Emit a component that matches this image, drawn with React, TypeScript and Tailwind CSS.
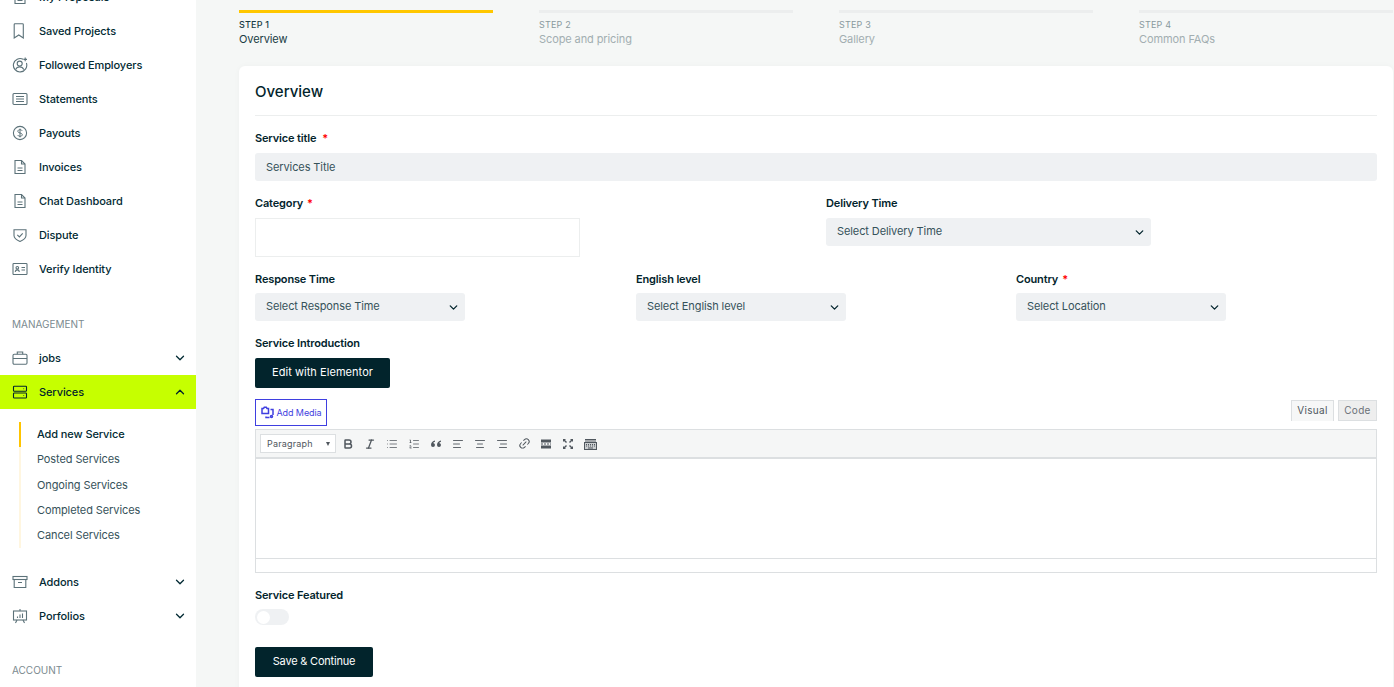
import React from 'react';
import {
  ChevronDown,
  ChevronUp,
  Bold,
  Italic,
  List,
  ListOrdered,
  AlignLeft,
  AlignCenter,
  AlignRight,
  Link2,
} from 'lucide-react';

const font = { fontFamily: 'Inter' };

const iconBase = {
  width: 16,
  height: 16,
  viewBox: '0 0 16 16',
  fill: 'none',
  stroke: 'currentColor',
  strokeWidth: 1.100,
};

const BookmarkIcon = () => (
  <svg {...iconBase} className="-ml-[1px]">
    <path d="M4 .8h7.500a.8.8 0 0 1 .8.800V15L7.800 12 3.200 15V1.600A.8.800 0 0 1 4 .8z" />
  </svg>
);

const FollowIcon = () => (
  <svg {...iconBase}>
    <path d="M11.200 2.300A6.700 6.700 0 1 0 14.400 6" />
    <circle cx="7.700" cy="6.600" r="2.500" />
    <path d="M3.600 12.600c.8-1.800 2.300-2.700 4.100-2.700s3.300.9 4.100 2.700" />
    <path d="M13.200.6v3.600M11.400 2.400H15" />
  </svg>
);

const StatementIcon = () => (
  <svg {...iconBase}>
    <rect x="1" y="2.500" width="14" height="11" rx="1" />
    <path d="M4 5.500h8M4 8h8M4 10.500h8" />
  </svg>
);

const DollarIcon = () => (
  <svg {...iconBase}>
    <circle cx="8" cy="8" r="6.600" />
    <path d="M10.200 5.800C9.900 5 9 4.700 8 4.700c-1.200 0-2.200.6-2.200 1.600 0 2.200 4.500 1.200 4.500 3.400 0 1-1 1.600-2.300 1.600-1.100 0-2-.4-2.300-1.200M8 3.600v8.800" strokeWidth="1" />
  </svg>
);

const DocIcon = () => (
  <svg {...iconBase}>
    <path d="M3 1.500h6.500L13 5v9.500H3z" />
    <path d="M9.500 1.500V5H13M5.500 9h5M5.500 11.500h5" />
  </svg>
);

const ShieldIcon = () => (
  <svg {...iconBase}>
    <path d="M2 2.800c4 0 8 0 12 0v5.700c0 2.800-3.100 4.800-6 6-2.900-1.200-6-3.200-6-6z" />
    <path d="M5.300 7.800l2.100 2.100 3.300-3.500" />
  </svg>
);

const IdIcon = () => (
  <svg {...iconBase}>
    <rect x="1" y="2.500" width="14" height="11" rx=".8" />
    <circle cx="5.300" cy="6.800" r="1.300" />
    <path d="M3.200 10.900c.2-1.400 1-2 2.100-2s1.900.6 2.100 2M9.500 6.500h3.500M9.500 9h3.500" />
  </svg>
);

const BriefcaseIcon = () => (
  <svg {...iconBase}>
    <rect x="1" y="4.200" width="14" height="10" rx="1.200" />
    <path d="M5.300 4.200V2h5.400v2.200M1 8.500h14" />
  </svg>
);

const ServerIcon = () => (
  <svg {...iconBase} strokeWidth={1.100}>
    <rect x="1.500" y="2.200" width="13" height="5" rx=".8" />
    <rect x="1.500" y="9" width="13" height="5" rx=".8" />
    <path d="M11.500 4.700h.6M11.500 11.500h.6" />
  </svg>
);

const ArchiveIcon = () => (
  <svg {...iconBase}>
    <rect x="1" y="2.500" width="14" height="3" />
    <path d="M2.200 5.500v8h11.600v-8M6 8.500h4" />
  </svg>
);

const BoardIcon = () => (
  <svg {...iconBase}>
    <rect x="1.500" y="3" width="13" height="9" />
    <path d="M8 1v2M5 12l-1.500 3M11 12l1.500 3M5.500 10V8.500M8 10V6.500M10.500 10V5.500" />
  </svg>
);

const Row = ({
  icon,
  label,
  chevron,
  active,
}: {
  icon: React.ReactNode;
  label: string;
  chevron?: 'up' | 'down';
  active?: boolean;
}) => (
  <div
    className={`flex h-[34px] items-center pl-[12px] pr-[9px] ${
      active ? 'bg-[#c6ff00] text-[#02242c]' : 'text-[#022a33]'
    }`}
  >
    <span className={`flex w-[27px] shrink-0 ${active ? 'text-[#02242c]' : 'text-[#5c7279]'}`}>{icon}</span>
    <span className="flex-1 text-[11px] font-medium tracking-[-0.1px]">{label}</span>
    {chevron === 'down' && <ChevronDown className="h-[14px] w-[14px]" strokeWidth={2.200} />}
    {chevron === 'up' && <ChevronUp className="h-[14px] w-[14px]" strokeWidth={2.200} />}
  </div>
);

const Sidebar = () => (
  <aside className="h-[687px] w-[196px] shrink-0 overflow-hidden bg-white">
    <div className="-mt-[20px]">
      <Row icon={<DocIcon />} label="My Proposals" />
      <Row icon={<BookmarkIcon />} label="Saved Projects" />
      <Row icon={<FollowIcon />} label="Followed Employers" />
      <Row icon={<StatementIcon />} label="Statements" />
      <Row icon={<DollarIcon />} label="Payouts" />
      <Row icon={<DocIcon />} label="Invoices" />
      <Row icon={<DocIcon />} label="Chat Dashboard" />
      <Row icon={<ShieldIcon />} label="Dispute" />
      <Row icon={<IdIcon />} label="Verify Identity" />
    </div>
    <p className="mt-[31px] mb-[10px] pl-3 text-[10px] leading-[14px] text-[#7b8a8f]">MANAGEMENT</p>
    <Row icon={<BriefcaseIcon />} label="jobs" chevron="down" />
    <Row icon={<ServerIcon />} label="Services" chevron="up" active />
    <div className="mt-[13px] ml-[19px] flex flex-col border-l-2 border-[#fff6e0] pl-4 text-[11px] tracking-[-0.1px] text-[#36525a]">
      <span className="relative flex h-[25px] items-center font-medium text-[#022a33]">
        <span className="absolute -left-[18px] top-0 h-[25px] w-[2px] bg-[#ffc400]" />
        Add new Service
      </span>
      <span className="flex h-[25px] items-center">Posted Services</span>
      <span className="flex h-[26px] items-center">Ongoing Services</span>
      <span className="flex h-[25px] items-center">Completed Services</span>
      <span className="flex h-[25px] items-center">Cancel Services</span>
    </div>
    <div className="mt-[17px]">
      <Row icon={<ArchiveIcon />} label="Addons" chevron="down" />
      <Row icon={<BoardIcon />} label="Porfolios" chevron="down" />
    </div>
    <p className="mt-[30px] pl-3 text-[10px] leading-[14px] text-[#7b8a8f]">ACCOUNT</p>
  </aside>
);

const steps = [
  { step: 'STEP 1', title: 'Overview', active: true },
  { step: 'STEP 2', title: 'Scope and pricing' },
  { step: 'STEP 3', title: 'Gallery' },
  { step: 'STEP 4', title: 'Common FAQs' },
];

const Steps = () => (
  <div className="grid grid-cols-4 gap-x-[46px] pt-[10px]">
    {steps.map(s => (
      <div key={s.step}>
        <div className={`h-[3px] ${s.active ? 'bg-[#ffc700]' : 'bg-[#eceeee]'}`} />
        <p className={`mt-[5px] text-[9px] leading-[14px] tracking-[0.2px] ${s.active ? 'font-medium text-[#193c44]' : 'text-[#8a9a9e]'}`}>
          {s.step}
        </p>
        <p className={`mb-[1px] text-[11px] leading-[14px] tracking-[-0.1px] ${s.active ? 'text-[#193c44]' : 'text-[#a2aeb1]'}`}>
          {s.title}
        </p>
      </div>
    ))}
  </div>
);

const Label = ({ text, required, wide }: { text: string; required?: boolean; wide?: boolean }) => (
  <p className="text-[11px] font-semibold leading-[14px] tracking-[-0.15px] text-[#02242c]">
    {text}
    {required && <span className={`text-[#ff0000] ${wide ? 'ml-[6px]' : 'ml-1'}`}>*</span>}
  </p>
);

const Select = ({ text, className }: { text: string; className: string }) => (
  <div className={`flex h-7 items-center justify-between rounded-[3px] bg-[#eff1f3] pl-[11px] pr-[5px] text-[11px] tracking-[-0.1px] text-[#36525a] ${className}`}>
    <span className="-mt-px">{text}</span>
    <ChevronDown className="h-[13px] w-[13px] text-[#02242c]" strokeWidth={2.400} />
  </div>
);

const DarkButton = ({ text, className }: { text: string; className: string }) => (
  <div className={`flex h-[30px] items-center justify-center rounded-[2px] bg-[#02242c] pb-px text-[11px] text-white ${className}`}>
    {text}
  </div>
);

const toolIcon = 'h-[12px] w-[12px]';

const Toolbar = () => (
  <div className="flex h-[29px] items-center gap-[8px] border-b-2 border-[#dcdfe1] bg-[#f5f6f6] pl-[4px] text-[#50575e]">
    <div className="-mr-[3px] flex h-[19px] w-[76px] items-center justify-between border border-[#dcdfe1] bg-white pl-[6px] pr-[5px] text-[9px] tracking-[0.2px] text-[#50575e]">
      Paragraph
      <span className="h-0 w-0 border-x-[2.500px] border-t-[4px] border-x-transparent border-t-[#50575e]" />
    </div>
    <span className="flex w-[14px] justify-center"><Bold className={toolIcon} strokeWidth={3} /></span>
    <span className="flex w-[14px] justify-center"><Italic className={toolIcon} strokeWidth={2.500} /></span>
    <span className="flex w-[14px] justify-center"><List className={toolIcon} strokeWidth={1.500} /></span>
    <span className="flex w-[14px] justify-center"><ListOrdered className={toolIcon} strokeWidth={1.500} /></span>
    <span className="flex w-[14px] justify-center">
      <svg width="12" height="12" viewBox="0 0 12 12" fill="currentColor">
        <path d="M5 2.500C2.800 3 1 4.500 1 7a2 2 0 1 0 2.200-2c.3-.6.9-1.100 1.800-1.300zM11 2.500C8.800 3 7 4.500 7 7a2 2 0 1 0 2.200-2c.3-.6.9-1.100 1.800-1.300z" />
      </svg>
    </span>
    <span className="flex w-[14px] justify-center"><AlignLeft className={toolIcon} strokeWidth={1.800} /></span>
    <span className="flex w-[14px] justify-center"><AlignCenter className={toolIcon} strokeWidth={1.800} /></span>
    <span className="flex w-[14px] justify-center"><AlignRight className={toolIcon} strokeWidth={1.800} /></span>
    <span className="flex w-[14px] justify-center"><Link2 className="h-[13px] w-[13px] -rotate-45" strokeWidth={1.800} /></span>
    <span className="flex w-[14px] justify-center">
      <svg width="12" height="12" viewBox="0 0 12 12" fill="currentColor">
        <path d="M1 1.500h10v3H1zM1 7.500h10v3H1zM1 5.600h2v.8H1zM4 5.600h2v.8H4zM7 5.600h2v.8H7zM10 5.600h1v.8h-1z" />
      </svg>
    </span>
    <span className="flex w-[14px] justify-center">
      <svg width="12" height="12" viewBox="0 0 12 12" fill="currentColor">
        <path d="M1 1h3L3 2l2 2-1 1-2-2-1 1zM11 1v3l-1-1-2 2-1-1 2-2-1-1zM1 11V8l1 1 2-2 1 1-2 2 1 1zM11 11H8l1-1-2-2 1-1 2 2 1-1z" />
      </svg>
    </span>
    <span className="flex w-[14px] justify-center">
      <svg width="13" height="12" viewBox="0 0 13 12" fill="none" stroke="currentColor" strokeWidth="1">
        <path d="M1 1.500h11M1 3h11" />
        <rect x=".5" y="4.500" width="12" height="7" fill="currentColor" fillOpacity=".25" />
        <path d="M2 6.500h9M2 8h9" strokeDasharray="1 1" />
        <path d="M4 10h5" />
      </svg>
    </span>
  </div>
);

export default function App() {
  return (
    <div className="flex h-[687px] w-[1394px] overflow-hidden bg-[#f5f7f6]" style={font}>
      <Sidebar />
      <main className="flex-1 pl-[43px] pr-px">
        <Steps />
        <section className="mt-[19px] h-[640px] rounded-t-[6px] bg-white px-4 shadow-[0_0_6px_rgba(2,36,44,0.03)]">
          <h2 className="flex h-[50px] items-center border-b border-[#eceeee] pt-[3px] text-[15px] font-medium text-[#02242c]">
            Overview
          </h2>
          <div className="mt-[15px]">
            <Label text="Service title" required wide />
          </div>
          <div className="mt-2 flex h-7 items-center rounded-[3px] bg-[#eff1f3] pl-[11px] text-[11px] tracking-[-0.1px] text-[#36525a]">
            Services Title
          </div>

          <div className="mt-[15px] flex">
            <div className="w-[571px]">
              <Label text="Category" required />
              <div className="mt-2 h-[39px] w-[325px] border border-[#eceeee] bg-white" />
            </div>
            <div>
              <Label text="Delivery Time" />
              <Select text="Select Delivery Time" className="mt-2 w-[325px]" />
            </div>
          </div>

          <div className="mt-[15px] grid grid-cols-[381px_380px_1fr]">
            <div>
              <Label text="Response Time" />
              <Select text="Select Response Time" className="mt-[7px] w-[210px]" />
            </div>
            <div>
              <Label text="English level" />
              <Select text="Select English level" className="mt-[7px] w-[210px]" />
            </div>
            <div>
              <Label text="Country" required />
              <Select text="Select Location" className="mt-[7px] w-[210px]" />
            </div>
          </div>

          <div className="mt-[15px]">
            <Label text="Service Introduction" />
          </div>
          <DarkButton text="Edit with Elementor" className="mt-2 w-[135px] tracking-[0.05px]" />

          <div className="mt-[11px] flex items-start justify-between">
            <div className="flex h-[27px] w-[72px] items-center justify-center gap-[3px] border border-[#3f3fe0] text-[9px] tracking-[-0.1px] text-[#3f3fe0]">
              <svg width="13" height="13" viewBox="0 0 13 13" fill="none" stroke="currentColor" strokeWidth="1.500">
                <path d="M1 2.500h1.500l.8-1.200h2L6 2.500h1.500v5H1z" />
                <path d="M9.500 3.500H12v5.500M5 10.500v1h3.500" />
                <circle cx="10.500" cy="10.500" r="1" />
              </svg>
              Add Media
            </div>
            <div className="mt-px flex gap-1 text-[10px] tracking-[0.3px] text-[#50575e]">
              <span className="flex h-[21px] w-[43px] items-center justify-center border border-b-0 border-[#dcdfe1] bg-[#f6f7f7] pb-px">Visual</span>
              <span className="flex h-[21px] w-[39px] items-center justify-center border border-[#dcdfe1] bg-[#eeeeee] pb-px text-[#6b7177]">Code</span>
            </div>
          </div>

          <div className="mt-[3px] border border-[#dcdfe1]">
            <Toolbar />
            <div className="h-[100px] border-b border-[#dcdfe1] bg-white" />
            <div className="h-[13px] bg-white" />
          </div>

          <div className="mt-[15px]">
            <Label text="Service Featured" />
          </div>
          <div className="mt-[7px] flex h-4 w-[34px] items-center rounded-full bg-[#eff1f3] pl-[2px]">
            <span className="h-[13px] w-[13px] rounded-full bg-white" />
          </div>
          <DarkButton text="Save & Continue" className="mt-[22px] w-[118px] tracking-[-0.2px]" />
        </section>
      </main>
    </div>
  );
}
